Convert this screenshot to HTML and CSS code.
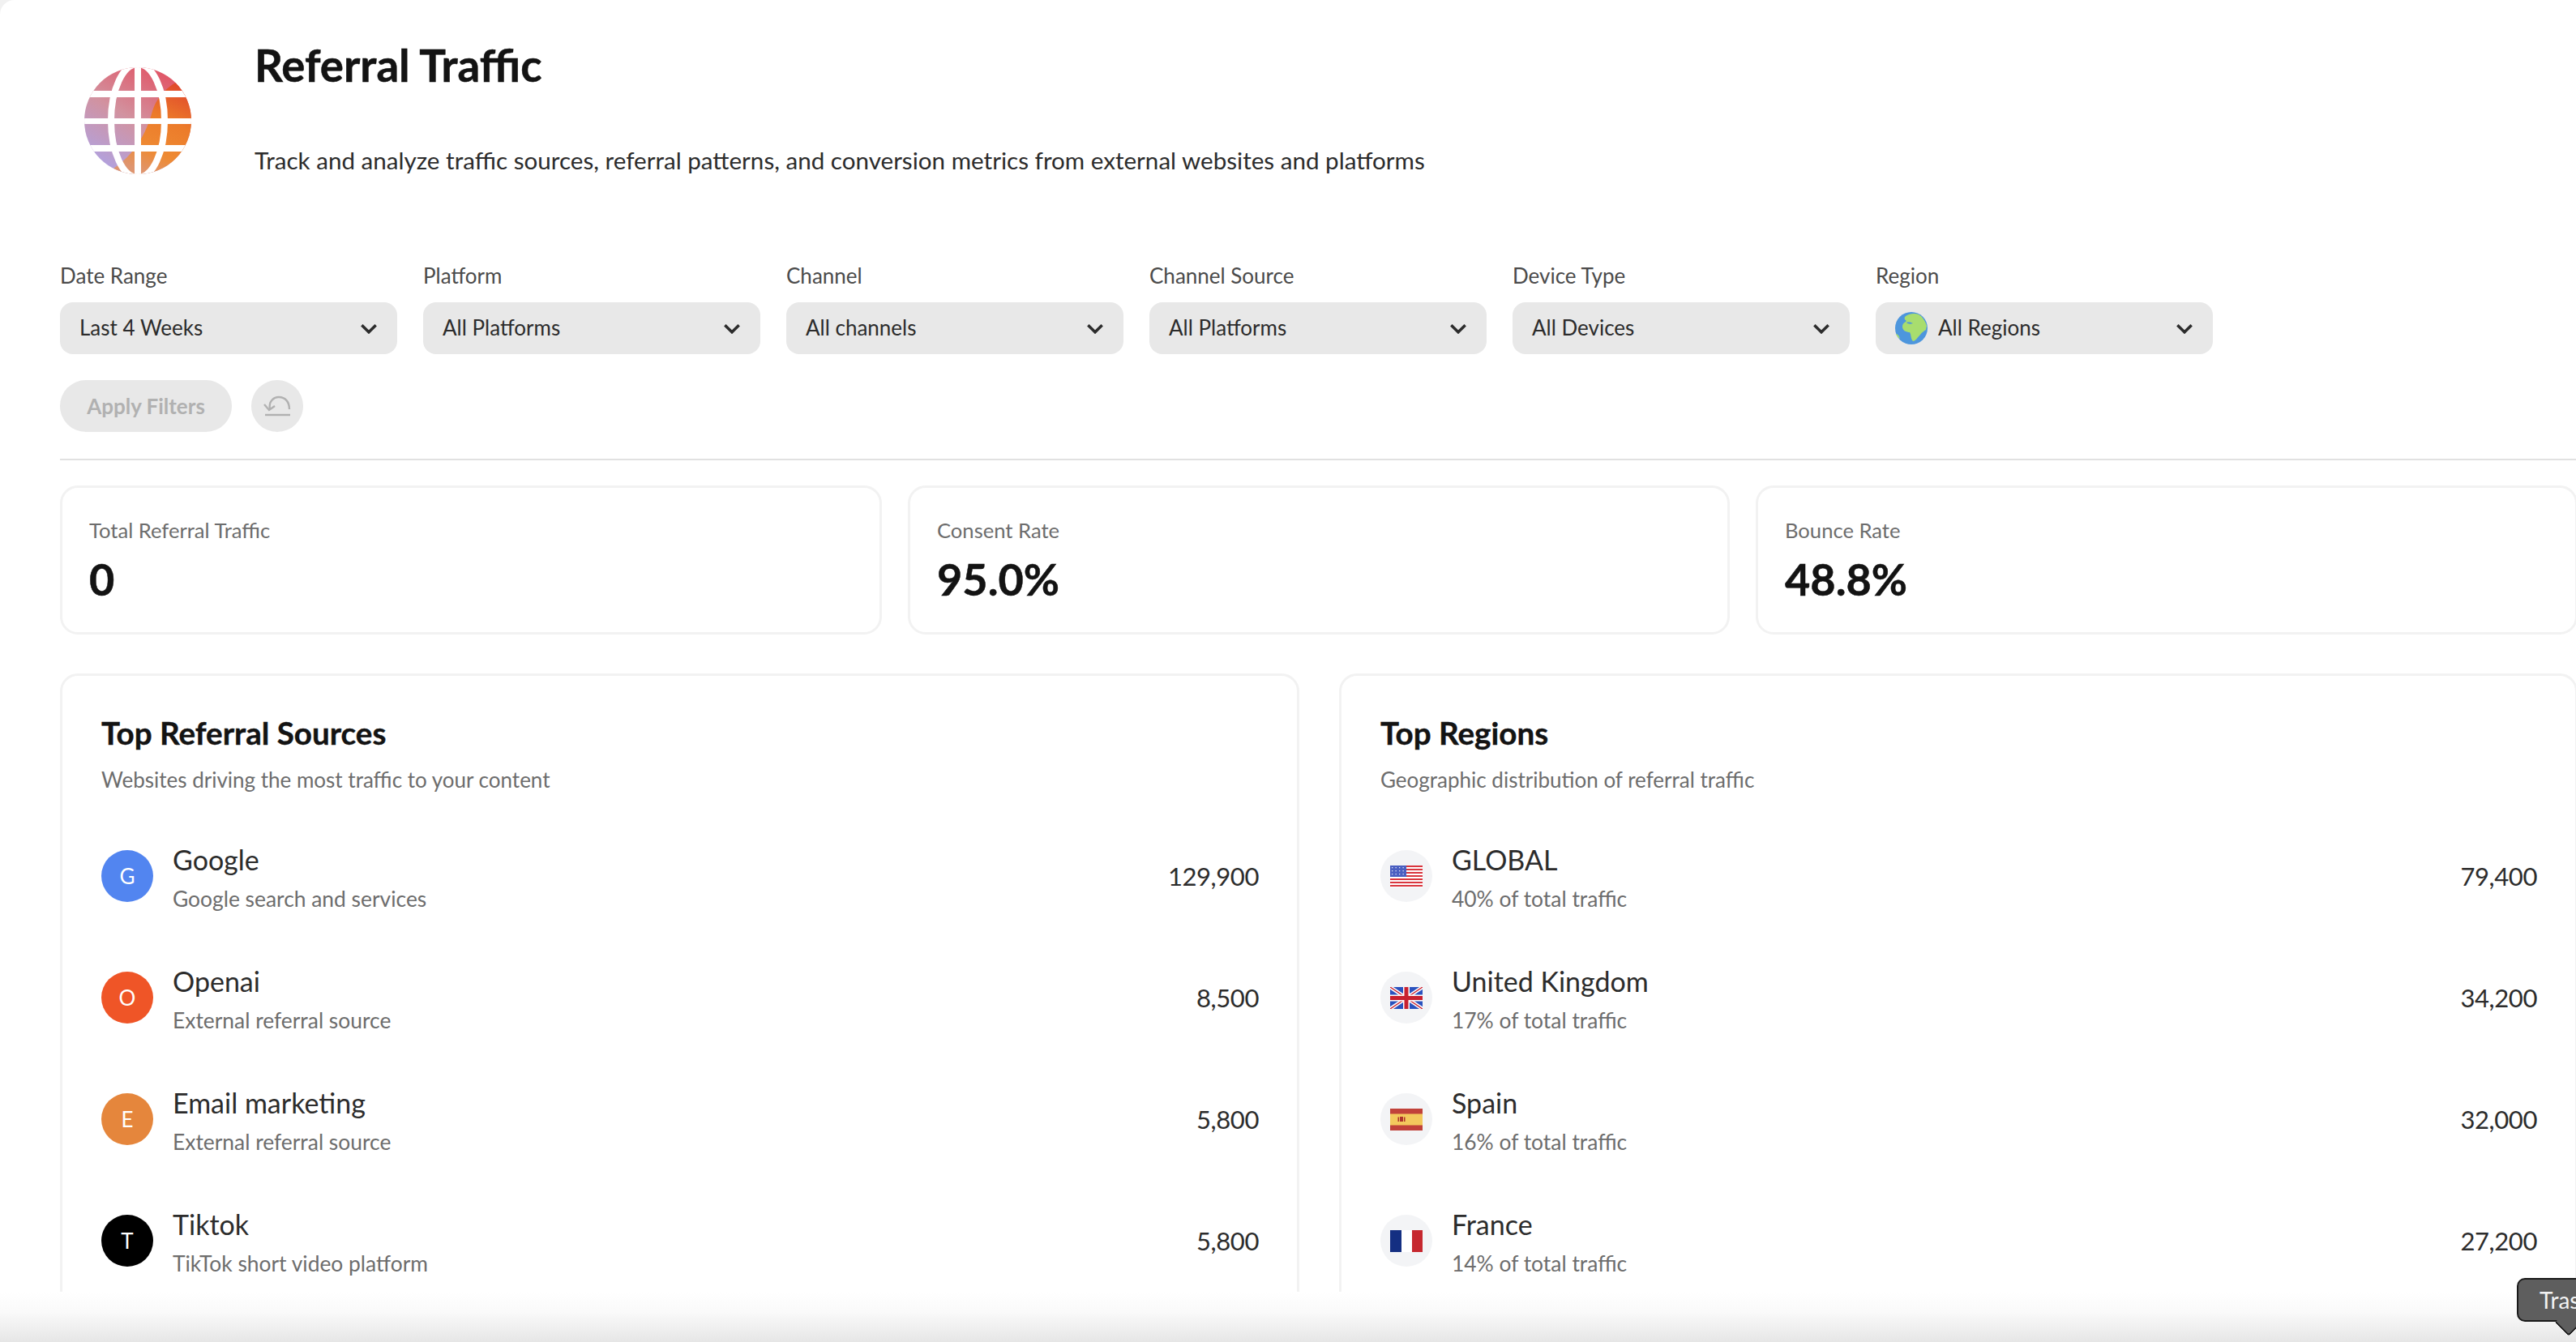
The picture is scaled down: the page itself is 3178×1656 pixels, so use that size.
FILE: index.html
```html
<!DOCTYPE html>
<html lang="en">
<head>
  <meta charset="UTF-8">
  <title>Referral Traffic</title>
  <link rel="stylesheet" href="styles.css">
</head>
<body>
<div class="page">
  <div class="content">
    <!-- Page header -->
    <header class="header">
      <svg class="logo" viewBox="0 0 132 132" aria-hidden="true">
        <defs>
          <linearGradient id="globeBase" x1="0.1" y1="0.85" x2="0.6" y2="0">
            <stop offset="0" stop-color="#b3a1dc"/>
            <stop offset="0.5" stop-color="#d2929f"/>
            <stop offset="1" stop-color="#e0596a"/>
          </linearGradient>
          <linearGradient id="globeWarm" x1="0.5" y1="1" x2="0.9" y2="0">
            <stop offset="0" stop-color="#de9570"/>
            <stop offset="0.22" stop-color="#ee8a33"/>
            <stop offset="0.55" stop-color="#ec7b2a"/>
            <stop offset="1" stop-color="#dd3a2c"/>
          </linearGradient>
          <clipPath id="globeClip"><circle cx="66" cy="66" r="66"/></clipPath>
        </defs>
        <g clip-path="url(#globeClip)">
          <rect width="132" height="132" fill="url(#globeBase)"/>
          <path d="M24 132 C52 118 74 92 84 54 C92 30 110 18 132 10 V132 Z" fill="url(#globeWarm)"/>
          <g fill="none" stroke="#fff" stroke-width="8">
            <ellipse cx="66" cy="66" rx="33" ry="70"/>
          </g>
          <g fill="#fff">
            <rect x="62" y="0" width="8" height="132"/>
            <rect x="0" y="29" width="132" height="8"/>
            <rect x="0" y="63" width="132" height="7"/>
            <rect x="0" y="96" width="132" height="8"/>
          </g>
        </g>
      </svg>
      <div class="header-text">
        <h1>Referral Traffic</h1>
        <p>Track and analyze traffic sources, referral patterns, and conversion metrics from external websites and platforms</p>
      </div>
    </header>

    <!-- Filters -->
    <div class="filters">
      <div class="filter">
        <label>Date Range</label>
        <div class="select"><span>Last 4 Weeks</span><svg class="chevron" viewBox="0 0 20 12"><path d="M2 2l8 8 8-8"/></svg></div>
      </div>
      <div class="filter">
        <label>Platform</label>
        <div class="select"><span>All Platforms</span><svg class="chevron" viewBox="0 0 20 12"><path d="M2 2l8 8 8-8"/></svg></div>
      </div>
      <div class="filter">
        <label>Channel</label>
        <div class="select"><span>All channels</span><svg class="chevron" viewBox="0 0 20 12"><path d="M2 2l8 8 8-8"/></svg></div>
      </div>
      <div class="filter">
        <label>Channel Source</label>
        <div class="select"><span>All Platforms</span><svg class="chevron" viewBox="0 0 20 12"><path d="M2 2l8 8 8-8"/></svg></div>
      </div>
      <div class="filter">
        <label>Device Type</label>
        <div class="select"><span>All Devices</span><svg class="chevron" viewBox="0 0 20 12"><path d="M2 2l8 8 8-8"/></svg></div>
      </div>
      <div class="filter">
        <label>Region</label>
        <div class="select">
          <svg class="earth" viewBox="0 0 40 40" aria-hidden="true">
            <circle cx="20" cy="20" r="20" fill="#4d96dd"/>
            <path d="M12 6 C16 2 24 1 29 3 C34 6 37 11 39 17 L38 22 C35 24 33 25 31 28 C28 31 25 36 22 36 C19 33 20 28 18 25 C14 25 9 23 9 18 C9 14 12 13 14 11 C12 10 11 8 12 6 Z" fill="#a8dd6e"/>
            <path d="M1 27 C3 27 5 29 6 33 C4 32 2 30 1 27 Z" fill="#a8dd6e"/>
            <path d="M14 13 C17 12 20 13 22 14 C19 15 16 15 14 13 Z" fill="#4d96dd"/>
          </svg>
          <span>All Regions</span><svg class="chevron" viewBox="0 0 20 12"><path d="M2 2l8 8 8-8"/></svg>
        </div>
      </div>
    </div>

    <div class="actions">
      <button class="btn-apply">Apply Filters</button>
      <button class="btn-reset" aria-label="Reset">
        <svg viewBox="0 0 36 28" aria-hidden="true">
          <path d="M9 18 C7 8 14 3 20 3 C28 3 33 9 33 18"/>
          <path d="M2 12l6 7 7-5"/>
          <path d="M3 25h31"/>
        </svg>
      </button>
    </div>

    <div class="divider"></div>

    <!-- Summary numbers -->
    <div class="stats">
      <div class="stat"><div class="stat-label">Total Referral Traffic</div><div class="stat-value">0</div></div>
      <div class="stat"><div class="stat-label">Consent Rate</div><div class="stat-value">95.0%</div></div>
      <div class="stat"><div class="stat-label">Bounce Rate</div><div class="stat-value">48.8%</div></div>
    </div>

    <div class="panels">
      <section class="panel">
        <h2>Top Referral Sources</h2>
        <p class="panel-sub">Websites driving the most traffic to your content</p>
        <div class="rows">
          <div class="row">
            <div class="avatar google">G</div>
            <div class="row-text"><div class="row-name">Google</div><div class="row-sub">Google search and services</div></div>
            <div class="row-value">129,900</div>
          </div>
          <div class="row">
            <div class="avatar openai">O</div>
            <div class="row-text"><div class="row-name">Openai</div><div class="row-sub">External referral source</div></div>
            <div class="row-value">8,500</div>
          </div>
          <div class="row">
            <div class="avatar email">E</div>
            <div class="row-text"><div class="row-name">Email marketing</div><div class="row-sub">External referral source</div></div>
            <div class="row-value">5,800</div>
          </div>
          <div class="row">
            <div class="avatar tiktok">T</div>
            <div class="row-text"><div class="row-name">Tiktok</div><div class="row-sub">TikTok short video platform</div></div>
            <div class="row-value">5,800</div>
          </div>
        </div>
      </section>

      <section class="panel">
        <h2>Top Regions</h2>
        <p class="panel-sub">Geographic distribution of referral traffic</p>
        <div class="rows">
          <div class="row">
            <div class="avatar flag">
              <svg viewBox="0 0 40 27" aria-hidden="true">
                <rect width="40" height="27" fill="#fff"/>
                <g fill="#d9363e">
                  <rect width="40" height="2"/><rect y="4" width="40" height="2"/><rect y="8" width="40" height="2"/>
                  <rect y="12" width="40" height="2"/><rect y="16" width="40" height="2"/><rect y="20" width="40" height="2"/><rect y="24" width="40" height="2"/>
                </g>
                <rect width="20" height="14" fill="#4a5fc1"/>
                <g fill="#dfe3f5">
                  <rect x="2" y="2" width="1.3" height="1.3"/><rect x="6.5" y="2" width="1.3" height="1.3"/><rect x="11" y="2" width="1.3" height="1.3"/><rect x="15.5" y="2" width="1.3" height="1.3"/>
                  <rect x="2" y="6" width="1.3" height="1.3"/><rect x="6.5" y="6" width="1.3" height="1.3"/><rect x="11" y="6" width="1.3" height="1.3"/><rect x="15.5" y="6" width="1.3" height="1.3"/>
                  <rect x="2" y="10" width="1.3" height="1.3"/><rect x="6.5" y="10" width="1.3" height="1.3"/><rect x="11" y="10" width="1.3" height="1.3"/><rect x="15.5" y="10" width="1.3" height="1.3"/>
                </g>
              </svg>
            </div>
            <div class="row-text"><div class="row-name">GLOBAL</div><div class="row-sub">40% of total traffic</div></div>
            <div class="row-value">79,400</div>
          </div>
          <div class="row">
            <div class="avatar flag">
              <svg viewBox="0 0 40 27" aria-hidden="true">
                <rect width="40" height="27" fill="#2a52be"/>
                <path d="M0 0L40 27M40 0L0 27" stroke="#fff" stroke-width="4.4"/>
                <path d="M0 0L40 27M40 0L0 27" stroke="#c8202f" stroke-width="1.4"/>
                <path d="M20 0V27M0 13.5H40" stroke="#fff" stroke-width="8"/>
                <path d="M20 0V27M0 13.5H40" stroke="#c8202f" stroke-width="5"/>
              </svg>
            </div>
            <div class="row-text"><div class="row-name">United Kingdom</div><div class="row-sub">17% of total traffic</div></div>
            <div class="row-value">34,200</div>
          </div>
          <div class="row">
            <div class="avatar flag">
              <svg viewBox="0 0 40 27" aria-hidden="true">
                <rect width="40" height="27" fill="#c1423a"/>
                <rect y="6.5" width="40" height="14" fill="#f3c95d"/>
                <g fill="#b0352c">
                  <rect x="9.5" y="10.5" width="1.5" height="5.5"/><rect x="12" y="10" width="4" height="6"/><rect x="17" y="10.5" width="1.5" height="5.5"/>
                </g>
              </svg>
            </div>
            <div class="row-text"><div class="row-name">Spain</div><div class="row-sub">16% of total traffic</div></div>
            <div class="row-value">32,000</div>
          </div>
          <div class="row">
            <div class="avatar flag">
              <svg viewBox="0 0 40 27" aria-hidden="true">
                <rect width="14" height="27" fill="#142f82"/>
                <rect x="14" width="13" height="27" fill="#fff"/>
                <rect x="27" width="13" height="27" fill="#c6282f"/>
              </svg>
            </div>
            <div class="row-text"><div class="row-name">France</div><div class="row-sub">14% of total traffic</div></div>
            <div class="row-value">27,200</div>
          </div>
        </div>
      </section>
    </div>
  </div>

  <div class="bottom-fade"></div>

  <!-- Dock tooltip cut off by the window edge -->
  <div class="tooltip">Trash</div>
</div>
</body>
</html>
```

FILE: styles.css
```css
/* Page */
html, body {
  margin: 0;
  height: 100%;
  overflow: hidden;
  background: #f1f1f1;
}

body {
  font-family: "Lato", "Noto Sans", sans-serif;
  color: #2c2c2c;
}

.page {
  position: relative;
  width: 3178px;
  height: 1656px;
  overflow: hidden;
  background: #fff;
  border-top-left-radius: 18px;
}

.content {
  width: 3106px;
  height: 1594px;
  padding-left: 74px;
  overflow: hidden;
}

/* Header */
.header {
  display: flex;
  height: 322px;
  box-sizing: border-box;
  padding: 48px 0 0 30px;
}

.logo {
  width: 132px;
  height: 132px;
  margin-top: 35px;
  flex-shrink: 0;
}

.header-text {
  margin-left: 78px;
}

h1 {
  margin: 0;
  font-size: 54.6px;
  line-height: 64px;
  font-weight: 700;
  -webkit-text-stroke: 0.5px #131313;
  color: #131313;
}

.header-text p {
  margin: 66px 0 0;
  font-size: 29.6px;
  line-height: 40px;
  color: #2c2c2c;
}

/* Filters */
.filters {
  display: flex;
  gap: 32px;
}

.filter {
  width: 416px;
}

.filter label {
  display: block;
  font-size: 26px;
  line-height: 36px;
  color: #4b4b4b;
  margin-bottom: 15px;
}

.select {
  display: flex;
  align-items: center;
  height: 64px;
  padding: 0 24px;
  background: #e8e8e8;
  border-radius: 16px;
  font-size: 26px;
  line-height: 62px;
}

.select span {
  flex: 1;
  margin-top: -2px;
}

.chevron {
  width: 22px;
  height: 13px;
  fill: none;
  stroke: #2c2c2c;
  stroke-width: 3.2;
}

.earth {
  width: 40px;
  height: 40px;
  margin-right: 13px;
}

.actions {
  display: flex;
  gap: 24px;
  margin-top: 32px;
}

.actions button {
  height: 64px;
  border: none;
  border-radius: 32px;
  background: #e8e8e8;
  font-family: inherit;
  padding: 0;
}

.btn-apply {
  width: 212px;
  font-size: 26px;
  font-weight: 700;
  color: #b1b1b1;
}

.btn-reset {
  width: 64px;
}

.btn-reset svg {
  display: block;
  width: 36px;
  height: 28px;
  margin: 0 auto;
  fill: none;
  stroke: #b1b1b1;
  stroke-width: 2.4;
}

.divider {
  height: 2px;
  margin-top: 33px;
  background: #e1e1e1;
}

/* Summary cards */
.stats {
  display: grid;
  grid-template-columns: repeat(3, 1014px);
  gap: 32px;
  margin-top: 31px;
}

.stat {
  height: 184px;
  box-sizing: border-box;
  padding: 34px 33px 0;
  border: 3px solid #f2f2f2;
  border-radius: 22px;
}

.stat-label {
  font-size: 25.6px;
  line-height: 36px;
  color: #6d6d6d;
}

.stat-value {
  margin-top: 12px;
  font-size: 54px;
  line-height: 62px;
  font-weight: 700;
  -webkit-text-stroke: 0.5px #131313;
  color: #131313;
}

/* Lists */
.panels {
  display: grid;
  grid-template-columns: 1529px 1528px;
  gap: 49px;
  margin-top: 48px;
}

.panel {
  box-sizing: border-box;
  height: 900px;
  padding: 46px 47px 0 48px;
  border: 3px solid #f2f2f2;
  border-radius: 22px;
}

h2 {
  margin: 0;
  font-size: 38.6px;
  line-height: 48px;
  font-weight: 700;
  -webkit-text-stroke: 0.4px #131313;
  color: #131313;
}

.panel-sub {
  margin: 16px 0 0;
  font-size: 26px;
  line-height: 36px;
  color: #6d6d6d;
}

.rows {
  display: flex;
  flex-direction: column;
  gap: 50px;
  margin-top: 51px;
}

.row {
  display: flex;
  align-items: center;
  height: 100px;
}

.avatar {
  display: flex;
  align-items: center;
  justify-content: center;
  width: 64px;
  height: 64px;
  border-radius: 50%;
  color: #fff;
  font-size: 26px;
  flex-shrink: 0;
}

.google { background: #5285f0; }
.openai { background: #ef5527; }
.email { background: #e5863c; }
.tiktok { background: #000; }
.flag { background: #f3f4f6; }

.flag svg {
  display: block;
  width: 40px;
  height: 27px;
}

.row-text {
  flex: 1;
  margin-left: 24px;
  padding-top: 4px;
}

.row-name {
  font-size: 34px;
  line-height: 44px;
  color: #2c2c2c;
}

.row-sub {
  margin-top: 8px;
  font-size: 26.4px;
  line-height: 36px;
  color: #6d6d6d;
}

.row-value {
  font-size: 31px;
  letter-spacing: -0.4px;
  line-height: 44px;
  color: #2c2c2c;
}

/* Bottom edge of the window */
.bottom-fade {
  height: 62px;
  background: linear-gradient(to bottom, #fff, #fafafa 40%, #e6e6e6);
}

.tooltip {
  position: absolute;
  left: 3105px;
  top: 1577px;
  width: 120px;
  height: 54px;
  box-sizing: border-box;
  padding-left: 26px;
  border: 2px solid #1a1a1a;
  border-radius: 10px;
  background: #5e5e5e;
  color: #f2f2f2;
  font-size: 28px;
  line-height: 50px;
}

.tooltip::after {
  content: "";
  position: absolute;
  left: 50px;
  top: 41px;
  width: 22px;
  height: 22px;
  background: #5e5e5e;
  border-right: 2px solid #1a1a1a;
  border-bottom: 2px solid #1a1a1a;
  border-bottom-right-radius: 4px;
  transform: rotate(45deg);
}
```
